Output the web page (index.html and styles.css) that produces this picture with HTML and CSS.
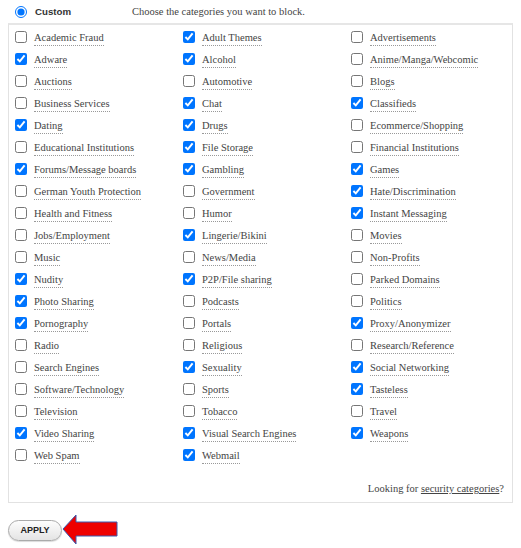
FILE: index.html
```html
<!DOCTYPE html>
<html>
<head>
<meta charset="utf-8">
<link rel="stylesheet" href="styles.css">
</head>
<body>
<div class="page">
  <div class="head">
    <label class="custom"><input type="radio" name="mode" checked> <span>Custom</span></label>
    <span class="hint">Choose the categories you want to block.</span>
  </div>
  <div class="box">
    <div class="grid">
      <label class="cat"><input type="checkbox"><span>Academic Fraud</span></label>
      <label class="cat"><input type="checkbox" checked><span>Adult Themes</span></label>
      <label class="cat"><input type="checkbox"><span>Advertisements</span></label>
      <label class="cat"><input type="checkbox" checked><span>Adware</span></label>
      <label class="cat"><input type="checkbox" checked><span>Alcohol</span></label>
      <label class="cat"><input type="checkbox"><span>Anime/Manga/Webcomic</span></label>
      <label class="cat"><input type="checkbox"><span>Auctions</span></label>
      <label class="cat"><input type="checkbox"><span>Automotive</span></label>
      <label class="cat"><input type="checkbox"><span>Blogs</span></label>
      <label class="cat"><input type="checkbox"><span>Business Services</span></label>
      <label class="cat"><input type="checkbox" checked><span>Chat</span></label>
      <label class="cat"><input type="checkbox" checked><span>Classifieds</span></label>
      <label class="cat"><input type="checkbox" checked><span>Dating</span></label>
      <label class="cat"><input type="checkbox" checked><span>Drugs</span></label>
      <label class="cat"><input type="checkbox"><span>Ecommerce/Shopping</span></label>
      <label class="cat"><input type="checkbox"><span>Educational Institutions</span></label>
      <label class="cat"><input type="checkbox" checked><span>File Storage</span></label>
      <label class="cat"><input type="checkbox"><span>Financial Institutions</span></label>
      <label class="cat"><input type="checkbox" checked><span>Forums/Message boards</span></label>
      <label class="cat"><input type="checkbox" checked><span>Gambling</span></label>
      <label class="cat"><input type="checkbox" checked><span>Games</span></label>
      <label class="cat"><input type="checkbox"><span>German Youth Protection</span></label>
      <label class="cat"><input type="checkbox"><span>Government</span></label>
      <label class="cat"><input type="checkbox" checked><span>Hate/Discrimination</span></label>
      <label class="cat"><input type="checkbox"><span>Health and Fitness</span></label>
      <label class="cat"><input type="checkbox"><span>Humor</span></label>
      <label class="cat"><input type="checkbox" checked><span>Instant Messaging</span></label>
      <label class="cat"><input type="checkbox"><span>Jobs/Employment</span></label>
      <label class="cat"><input type="checkbox" checked><span>Lingerie/Bikini</span></label>
      <label class="cat"><input type="checkbox"><span>Movies</span></label>
      <label class="cat"><input type="checkbox"><span>Music</span></label>
      <label class="cat"><input type="checkbox"><span>News/Media</span></label>
      <label class="cat"><input type="checkbox"><span>Non-Profits</span></label>
      <label class="cat"><input type="checkbox" checked><span>Nudity</span></label>
      <label class="cat"><input type="checkbox" checked><span>P2P/File sharing</span></label>
      <label class="cat"><input type="checkbox"><span>Parked Domains</span></label>
      <label class="cat"><input type="checkbox" checked><span>Photo Sharing</span></label>
      <label class="cat"><input type="checkbox"><span>Podcasts</span></label>
      <label class="cat"><input type="checkbox"><span>Politics</span></label>
      <label class="cat"><input type="checkbox" checked><span>Pornography</span></label>
      <label class="cat"><input type="checkbox"><span>Portals</span></label>
      <label class="cat"><input type="checkbox" checked><span>Proxy/Anonymizer</span></label>
      <label class="cat"><input type="checkbox"><span>Radio</span></label>
      <label class="cat"><input type="checkbox"><span>Religious</span></label>
      <label class="cat"><input type="checkbox"><span>Research/Reference</span></label>
      <label class="cat"><input type="checkbox"><span>Search Engines</span></label>
      <label class="cat"><input type="checkbox" checked><span>Sexuality</span></label>
      <label class="cat"><input type="checkbox" checked><span>Social Networking</span></label>
      <label class="cat"><input type="checkbox"><span>Software/Technology</span></label>
      <label class="cat"><input type="checkbox"><span>Sports</span></label>
      <label class="cat"><input type="checkbox" checked><span>Tasteless</span></label>
      <label class="cat"><input type="checkbox"><span>Television</span></label>
      <label class="cat"><input type="checkbox"><span>Tobacco</span></label>
      <label class="cat"><input type="checkbox"><span>Travel</span></label>
      <label class="cat"><input type="checkbox" checked><span>Video Sharing</span></label>
      <label class="cat"><input type="checkbox" checked><span>Visual Search Engines</span></label>
      <label class="cat"><input type="checkbox" checked><span>Weapons</span></label>
      <label class="cat"><input type="checkbox"><span>Web Spam</span></label>
      <label class="cat"><input type="checkbox" checked><span>Webmail</span></label>
    </div>
    <div class="more">Looking for <a href="#">security categories</a>?</div>
  </div>
  <div class="actions">
    <button class="apply">APPLY</button>
    <svg class="arrow" width="58" height="32" viewBox="0 0 58 32">
      <polygon points="1,15 14,1 14,8 55,8 55,22 14,22 14,30" fill="#ee0000" stroke="#3a5ab0" stroke-width="1"/>
    </svg>
  </div>
</div>
</body>
</html>
```

FILE: styles.css
```css
html, body {
  margin: 0;
  padding: 0;
  background: #fff;
}
.page {
  padding: 0 8px;
  font-family: "Liberation Serif", "Times New Roman", serif;
  font-size: 10.5px;
  color: #444;
}
.head {
  height: 23px;
  display: flex;
  align-items: center;
}
.custom {
  display: flex;
  align-items: center;
  width: 124px;
  padding-left: 7px;
  box-sizing: border-box;
}
.custom input {
  margin: 0 8px 0 0;
  width: 12px;
  height: 12px;
}
.custom span {
  font-family: "Liberation Sans", Arial, sans-serif;
  font-weight: bold;
  font-size: 9.7px;
  color: #333;
}
.hint {
  color: #444;
}
.box {
  border: 1px solid #e2e2e2;
  border-top: 2px solid #e6e6e6;
  height: 480px;
  box-sizing: border-box;
  display: flex;
  flex-direction: column;
  justify-content: space-between;
  padding: 1px 8px 8px 6px;
}
.grid {
  display: grid;
  grid-template-columns: 168px 168px 150px;
  grid-auto-rows: 22px;
}
.cat {
  display: flex;
  align-items: center;
}
.cat input {
  margin: 0 7px 0 0;
  width: 12px;
  height: 12px;
}
.cat span {
  border-bottom: 1px dotted #999;
  line-height: 12px;
  padding-bottom: 1px;
  margin-top: 3px;
}
.more {
  text-align: right;
  color: #444;
}
.more a {
  color: #444;
  text-decoration: underline;
}
.actions {
  display: flex;
  align-items: center;
  padding-top: 11px;
}
.apply {
  width: 54px;
  height: 21px;
  border-radius: 11px;
  border: 1px solid #aaa;
  background: linear-gradient(#fdfdfd, #e4e4e4);
  font-family: "Liberation Sans", Arial, sans-serif;
  font-weight: bold;
  font-size: 9px;
  color: #222;
  padding: 0;
  box-shadow: 0 1px 1px rgba(0,0,0,0.15);
}
.arrow {
  display: block;
  margin-left: 0;
}
```
